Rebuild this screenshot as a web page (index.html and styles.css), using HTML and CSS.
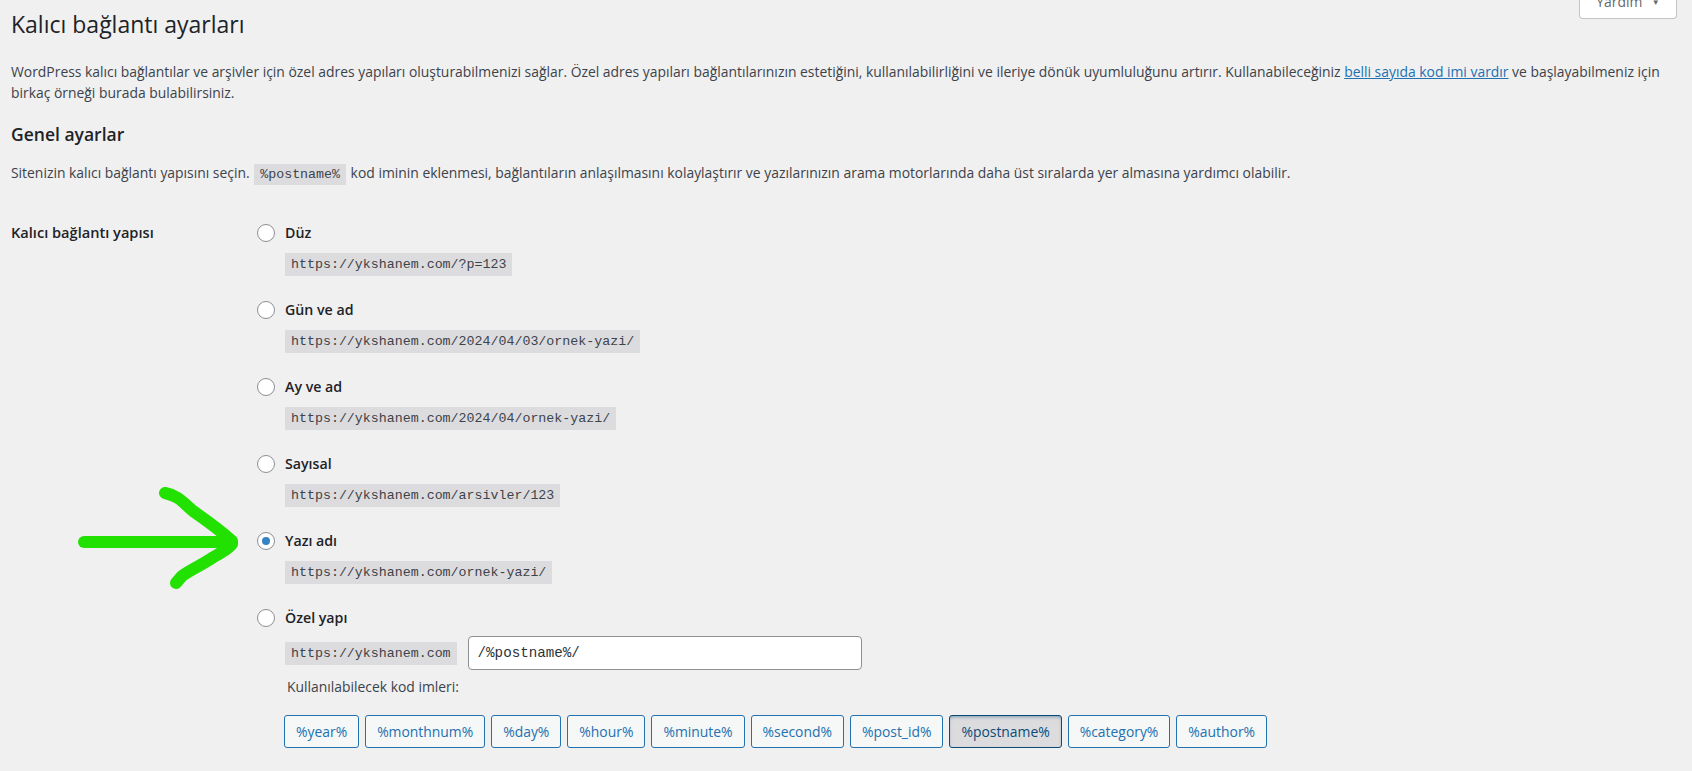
FILE: index.html
```html
<!DOCTYPE html>
<html lang="tr">
<head>
  <meta charset="UTF-8">
  <title>Kalıcı bağlantı ayarları</title>
  <link rel="stylesheet" href="styles.css">
</head>
<body>
  <div class="help-links">
    <button class="help-tab">Yardım <span class="caret">&#9660;</span></button>
  </div>

  <div class="wrap">
    <h1>Kalıcı bağlantı ayarları</h1>

    <p class="intro">WordPress kalıcı bağlantılar ve arşivler için özel adres yapıları oluşturabilmenizi sağlar. Özel adres yapıları bağlantılarınızın estetiğini, kullanılabilirliğini ve ileriye dönük uyumluluğunu artırır. Kullanabileceğiniz <a href="#">belli sayıda kod imi vardır</a> ve başlayabilmeniz için birkaç örneği burada bulabilirsiniz.</p>

    <h2>Genel ayarlar</h2>
    <p class="lead">Sitenizin kalıcı bağlantı yapısını seçin. <code>%postname%</code> kod iminin eklenmesi, bağlantıların anlaşılmasını kolaylaştırır ve yazılarınızın arama motorlarında daha üst sıralarda yer almasına yardımcı olabilir.</p>

    <div class="form-row">
      <div class="row-title">Kalıcı bağlantı yapısı</div>
      <div class="structure">
        <div class="option">
          <span class="radio"></span>
          <div class="option-body">
            <label>Düz</label>
            <div><code>https://ykshanem.com/?p=123</code></div>
          </div>
        </div>
        <div class="option">
          <span class="radio"></span>
          <div class="option-body">
            <label>Gün ve ad</label>
            <div><code>https://ykshanem.com/2024/04/03/ornek-yazi/</code></div>
          </div>
        </div>
        <div class="option">
          <span class="radio"></span>
          <div class="option-body">
            <label>Ay ve ad</label>
            <div><code>https://ykshanem.com/2024/04/ornek-yazi/</code></div>
          </div>
        </div>
        <div class="option">
          <span class="radio"></span>
          <div class="option-body">
            <label>Sayısal</label>
            <div><code>https://ykshanem.com/arsivler/123</code></div>
          </div>
        </div>
        <div class="option">
          <span class="radio checked"></span>
          <div class="option-body">
            <label>Yazı adı</label>
            <div><code>https://ykshanem.com/ornek-yazi/</code></div>
          </div>
        </div>
        <div class="option custom">
          <span class="radio"></span>
          <div class="option-body">
            <label>Özel yapı</label>
            <div class="custom-field">
              <code>https://ykshanem.com</code>
              <input type="text" class="structure-input" value="/%postname%/">
            </div>
            <p class="tags-label">Kullanılabilecek kod imleri:</p>
            <div class="tags">
              <button class="tag">%year%</button>
              <button class="tag">%monthnum%</button>
              <button class="tag">%day%</button>
              <button class="tag">%hour%</button>
              <button class="tag">%minute%</button>
              <button class="tag">%second%</button>
              <button class="tag">%post_id%</button>
              <button class="tag active">%postname%</button>
              <button class="tag">%category%</button>
              <button class="tag">%author%</button>
            </div>
          </div>
        </div>
      </div>
    </div>
  </div>

  <!-- hand drawn marker pointing at the selected option -->
  <svg class="marker" width="260" height="150" viewBox="0 0 260 150">
    <g fill="none" stroke="#22e100" stroke-width="12" stroke-linecap="round" stroke-linejoin="round">
      <path d="M84 92 L232 92"/>
      <path d="M165 43 C180 46 184 54 193 61 C206 70 220 80 232 91"/>
      <path d="M232 94 C228 99 224 101 212 108 C200 116 190 120 182 126 L176 133"/>
    </g>
  </svg>
</body>
</html>
```

FILE: styles.css
```css
body {
  margin: 0;
  background: #f0f0f1;
  color: #3c434a;
  font-family: 'Open Sans', 'Noto Sans', sans-serif;
  font-size: 13.9px;
  position: relative;
  min-height: 771px;
}

.wrap {
  padding: 9px 22px 0 11px;
}

h1 {
  margin: 0;
  font-size: 23px;
  font-weight: 400;
  line-height: 30px;
  color: #1d2327;
}

.intro {
  margin: 22px 0 0;
  line-height: 21px;
}

a {
  color: #2271b1;
  text-decoration: underline;
}

h2 {
  margin: 19px 0 0;
  font-size: 17.5px;
  font-weight: 600;
  line-height: 25px;
  color: #1d2327;
}

.lead {
  margin: 15px 0 0;
  line-height: 21px;
}

code {
  font-family: 'Liberation Mono', 'DejaVu Sans Mono', monospace;
  font-size: 13.3px;
  line-height: 17px;
  padding: 3px 6px 3px;
  background: #dcdcde;
  color: #3c434a;
}

.lead code {
  margin: 0 1px;
}

/* permalink structure table */
.form-row {
  display: grid;
  grid-template-columns: 246px 1fr;
  margin-top: 39px;
}

.row-title {
  font-size: 14.6px;
  font-weight: 600;
  color: #1d2327;
  line-height: 21px;
}

.option {
  display: flex;
  align-items: flex-start;
  margin-bottom: 23px;
}

.radio {
  width: 16px;
  height: 16px;
  margin: 2px 10px 0 0;
  border: 1px solid #8c8f94;
  border-radius: 50%;
  background: #fff;
  flex-shrink: 0;
  position: relative;
}

.radio.checked::after {
  content: "";
  position: absolute;
  left: 4px;
  top: 4px;
  width: 8px;
  height: 8px;
  border-radius: 50%;
  background: #3582c4;
}

.option-body {
  display: flex;
  flex-direction: column;
}

.option-body label {
  font-size: 14.2px;
  font-weight: 600;
  color: #1d2327;
  line-height: 21px;
  margin-bottom: 10px;
}

.option-body code {
  display: inline-block;
}

.custom .option-body label {
  margin-bottom: 8px;
}

.custom-field {
  display: flex;
  align-items: center;
  gap: 11px;
}

.structure-input {
  width: 394px;
  height: 34px;
  box-sizing: border-box;
  padding: 0 9px;
  border: 1px solid #8c8f94;
  border-radius: 4px;
  background: #fff;
  font-family: 'Liberation Mono', 'DejaVu Sans Mono', monospace;
  font-size: 14.2px;
  color: #2c3338;
}

.tags-label {
  margin: 6px 0 0 2px;
  line-height: 21px;
}

.tags {
  display: flex;
  gap: 6px;
  margin-top: 18px;
  margin-left: -1px;
}

.tag {
  height: 33px;
  padding: 0 11px;
  border: 1px solid #2271b1;
  border-radius: 3px;
  background: #f6f7f7;
  color: #2271b1;
  font-family: 'Open Sans', 'Noto Sans', sans-serif;
  font-size: 13.9px;
}

.tag.active {
  background: #dcdcde;
  border-color: #0a4b78;
  color: #0a4b78;
  box-shadow: inset 0 2px 5px -3px #0a4b78;
}

/* help tab hanging from the top edge */
.help-links {
  position: absolute;
  top: -10px;
  right: 15px;
}

.help-tab {
  width: 98px;
  height: 29px;
  padding: 0 0 6px;
  border: 1px solid #c3c4c7;
  border-top: none;
  border-radius: 0 0 4px 4px;
  background: #fff;
  color: #646970;
  font-family: 'Open Sans', 'Noto Sans', sans-serif;
  font-size: 13.9px;
}

.caret {
  font-size: 8px;
  margin-left: 6px;
  vertical-align: 2px;
}

.marker {
  position: absolute;
  left: 0;
  top: 450px;
}
```
